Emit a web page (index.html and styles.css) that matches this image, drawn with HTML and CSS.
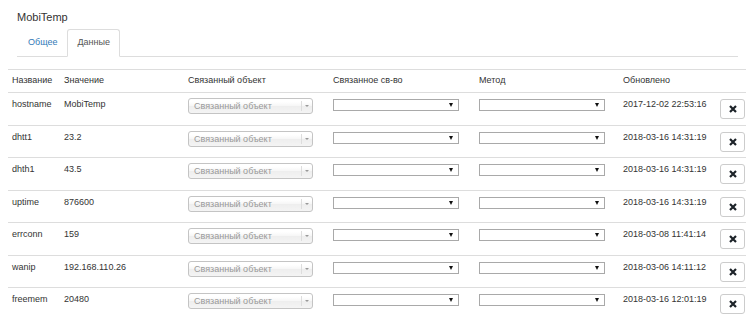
FILE: index.html
```html
<!DOCTYPE html>
<html lang="ru">
<head>
    <meta charset="UTF-8">
    <title>MobiTemp</title>
    <link rel="stylesheet" href="styles.css">
</head>
<body>
    <div class="device-title">MobiTemp</div>

    <ul class="nav-tabs">
        <li><a href="#">Общее</a></li>
        <li class="active"><a href="#">Данные</a></li>
    </ul>

    <table class="data-table">
        <colgroup>
            <col style="width:52px">
            <col style="width:124px">
            <col style="width:145px">
            <col style="width:146px">
            <col style="width:144px">
            <col style="width:97px">
            <col style="width:30px">
        </colgroup>
        <thead>
            <tr>
                <th>Название</th>
                <th>Значение</th>
                <th>Связанный объект</th>
                <th>Связанное св-во</th>
                <th>Метод</th>
                <th>Обновлено</th>
                <th></th>
            </tr>
        </thead>
        <tbody id="rows"></tbody>
    </table>

    <script>
        // Данные устройства
        var values = [
            ['hostname', 'MobiTemp', '2017-12-02 22:53:16'],
            ['dhtt1', '23.2', '2018-03-16 14:31:19'],
            ['dhth1', '43.5', '2018-03-16 14:31:19'],
            ['uptime', '876600', '2018-03-16 14:31:19'],
            ['errconn', '159', '2018-03-08 11:41:14'],
            ['wanip', '192.168.110.26', '2018-03-06 14:11:12'],
            ['freemem', '20480', '2018-03-16 12:01:19']
        ];

        var html = '';
        values.forEach(function (v) {
            html += '<tr>' +
                '<td>' + v[0] + '</td>' +
                '<td>' + v[1] + '</td>' +
                '<td><div class="chosen-box"><span>Связанный объект</span><b class="chosen-arrow"></b></div></td>' +
                '<td><div class="plain-select"><b></b></div></td>' +
                '<td><div class="plain-select"><b></b></div></td>' +
                '<td>' + v[2] + '</td>' +
                '<td><button class="btn-remove"><svg width="8" height="8" viewBox="0 0 8 8"><path d="M1 1L7 7M7 1L1 7" stroke="#1d2329" stroke-width="2.2"/></svg></button></td>' +
                '</tr>';
        });
        document.getElementById('rows').innerHTML = html;
    </script>
</body>
</html>
```

FILE: styles.css
```css
body {
    margin: 0;
    font-family: "Liberation Sans", Arial, sans-serif;
    font-size: 9px;
    color: #333;
    background: #fff;
}
.device-title {
    font-size: 11px;
    line-height: 13px;
    padding: 11px 0 0 17px;
}
.nav-tabs {
    list-style: none;
    margin: 5px 8px 0 17px;
    padding: 0 0 0 1px;
    display: flex;
    border-bottom: 1px solid #ddd;
}
.nav-tabs li {
    margin-bottom: -1px;
}
.nav-tabs a {
    display: block;
    padding: 7px 9px 8px;
    line-height: 11px;
    border: 1px solid transparent;
    border-radius: 3px 3px 0 0;
    color: #337ab7;
    text-decoration: none;
}
.nav-tabs .active a {
    color: #555;
    border-color: #ddd #ddd transparent;
    background: #fff;
}
.data-table {
    margin: 12px 0 0 8px;
    width: 738px;
    table-layout: fixed;
    border-collapse: collapse;
}
.data-table th {
    font-weight: normal;
    text-align: left;
    padding: 5px 4px 6px;
    line-height: 11px;
    border-top: 1px solid #ddd;
    white-space: nowrap;
}
.data-table td {
    padding: 6px 4px 5.5px;
    line-height: 11px;
    vertical-align: top;
    border-top: 1px solid #ddd;
    white-space: nowrap;
}
.chosen-box {
    position: relative;
    width: 123px;
    height: 14px;
    border: 1px solid #c4c4c4;
    border-radius: 3px;
    background: linear-gradient(#fff 20%, #f6f6f6 50%, #eee 52%, #f4f4f4);
    color: #999;
    line-height: 14px;
    margin-top: -1px;
}
.chosen-box span {
    padding-left: 5px;
}
.chosen-arrow {
    position: absolute;
    right: 0;
    top: 2px;
    width: 10px;
    height: 10px;
    border-left: 1px solid #ddd;
}
.chosen-arrow::after {
    content: "";
    position: absolute;
    left: 3px;
    top: 4px;
    border-left: 2px solid transparent;
    border-right: 2px solid transparent;
    border-top: 2px solid #999;
}
.plain-select {
    position: relative;
    width: 124px;
    height: 10px;
    border: 1px solid #a9a9a9;
    background: #fff;
}
.plain-select b {
    position: absolute;
    right: 5px;
    top: 3px;
    border-left: 2px solid transparent;
    border-right: 2px solid transparent;
    border-top: 4px solid #111;
}
.btn-remove {
    display: flex;
    align-items: center;
    justify-content: center;
    width: 25px;
    height: 20px;
    padding: 0;
    border: 1px solid #ccc;
    border-radius: 3px;
    background: #fff;
}
```
